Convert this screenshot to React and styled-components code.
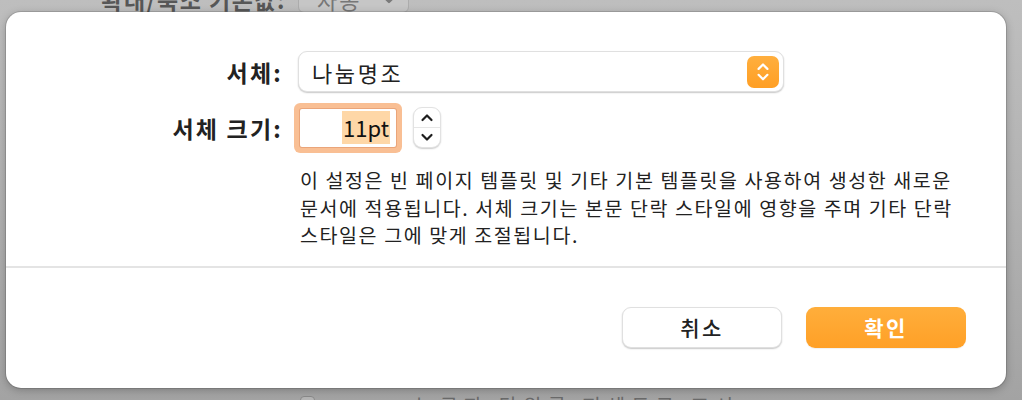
import React from 'react'
import styled, { createGlobalStyle } from 'styled-components'

const GlobalStyle = createGlobalStyle`
  html, body {
    margin: 0;
    padding: 0;
  }
  body {
    font-family: "Noto Sans CJK KR", "Noto Sans", sans-serif;
    color: #222;
  }
`

const font = `"Noto Sans CJK KR", "Noto Sans", sans-serif`

const Page = styled.div`
  position: relative;
  width: 1022px;
  height: 400px;
  overflow: hidden;
  display: flex;
  flex-direction: column;
  justify-content: space-between;
  background: linear-gradient(180deg, #bebebe 0%, #b2b2b2 50%, #a3a3a3 100%);
`

const BgTopRow = styled.div`
  display: flex;
  align-items: flex-end;
  height: 28px;
  margin-top: -15px;
  padding-left: 90px;
  gap: 12px;
`

const BgLabel = styled.div`
  width: 196px;
  text-align: right;
  font-family: ${font};
  font-size: 23px;
  font-weight: 700;
  letter-spacing: 1.5px;
  color: #575757;
  line-height: 28px;
`

const BgPopup = styled.div`
  width: 111px;
  height: 28px;
  box-sizing: border-box;
  display: flex;
  align-items: center;
  justify-content: space-between;
  padding: 0 12px 0 18px;
  border: 1px solid #acacac;
  border-radius: 6px;
  background: #c6c6c6;
  font-family: ${font};
  font-size: 22px;
  letter-spacing: 2px;
  color: #777;
`

const BgBottomRow = styled.div`
  display: flex;
  align-items: flex-start;
  height: 20px;
  margin-bottom: -16px;
  padding-left: 300px;
  gap: 100px;
`

const BgCheck = styled.div`
  width: 13px;
  height: 13px;
  border: 1px solid #8a8a8a;
  border-radius: 4px;
  background: #b4b4b4;
`

const BgText = styled.div`
  font-family: ${font};
  font-size: 20px;
  color: #6a6a6a;
  letter-spacing: 6px;
  line-height: 20px;
`

const Dialog = styled.div`
  position: absolute;
  left: 6px;
  top: 12px;
  width: 1000px;
  height: 376px;
  box-sizing: border-box;
  background: #fff;
  border-radius: 15px;
  box-shadow: 0 0 0 1px rgba(0, 0, 0, 0.12), 0 2px 8px rgba(0, 0, 0, 0.25);
  display: flex;
  flex-direction: column;
`

const Form = styled.div`
  display: grid;
  grid-template-columns: 275px 1fr;
  column-gap: 17px;
  row-gap: 15px;
  padding-top: 39px;
  align-items: center;
`

const Label = styled.div`
  text-align: right;
  font-family: ${font};
  font-size: 23px;
  font-weight: 700;
  letter-spacing: 2.2px;
  margin-right: -2px;
  color: #222;
  white-space: nowrap;
`

const Select = styled.div`
  width: 486px;
  height: 41px;
  box-sizing: border-box;
  display: flex;
  align-items: center;
  justify-content: space-between;
  padding: 0 4px 0 13px;
  border: 1px solid #e0e0e0;
  border-radius: 9px;
  background: #fff;
  box-shadow: 0 1px 1.5px rgba(0, 0, 0, 0.22);
  font-family: ${font};
  font-size: 22px;
  letter-spacing: 2.6px;
  color: #222;
`

const OrangeStepper = styled.div`
  width: 32px;
  height: 32px;
  border-radius: 7px;
  background: linear-gradient(180deg, #ffaf3e 0%, #ff9f24 100%);
  display: flex;
  align-items: center;
  justify-content: center;
`

const SizeRow = styled.div`
  display: flex;
  align-items: center;
  gap: 17px;
  height: 41px;
`

const Field = styled.div`
  width: 96px;
  height: 38px;
  margin-left: 2px;
  box-sizing: border-box;
  display: flex;
  align-items: center;
  justify-content: flex-end;
  padding-right: 6px;
  background: #fff;
  border-radius: 2px;
  box-shadow: 0 0 0 1px #eaa57a, 0 0 0 6px #f9bf94;
`

const Selected = styled.span`
  display: inline-block;
  height: 33px;
  line-height: 33px;
  padding: 0 1px;
  background: #fed7a7;
  font-family: ${font};
  font-size: 22px;
  color: #111;
`

const Stepper = styled.div`
  width: 28px;
  height: 41px;
  box-sizing: border-box;
  border: 1px solid #e2e2e2;
  border-radius: 9px;
  background: #fff;
  box-shadow: 0 1px 1.5px rgba(0, 0, 0, 0.2);
  display: flex;
  flex-direction: column;
`

const StepHalf = styled.div`
  flex: 1;
  display: flex;
  align-items: center;
  justify-content: center;
  border-top: ${(props) => (props.bottom ? '1px solid #e6e6e6' : 'none')};
`

const Description = styled.p`
  grid-column: 2;
  margin: 3px 0 0 2px;
  font-family: ${font};
  font-size: 19.5px;
  letter-spacing: 1.6px;
  line-height: 27.5px;
  color: #222;
  white-space: nowrap;
`

const Separator = styled.div`
  height: 2px;
  margin-top: 17px;
  background: #e4e4e4;
`

const Buttons = styled.div`
  display: flex;
  justify-content: flex-end;
  gap: 24px;
  padding: 39px 40px 0 0;
`

const Button = styled.div`
  width: 160px;
  height: 41px;
  box-sizing: border-box;
  display: flex;
  align-items: center;
  justify-content: center;
  border-radius: 9px;
  font-family: ${font};
  font-size: 21px;
  letter-spacing: 2.5px;
  font-weight: ${(props) => (props.primary ? 700 : 500)};
  color: ${(props) => (props.primary ? '#fff' : '#222')};
  background: ${(props) =>
    props.primary ? 'linear-gradient(180deg, #ffae3b 0%, #ffa027 100%)' : '#fff'};
  border: ${(props) => (props.primary ? 'none' : '1px solid #e0e0e0')};
  box-shadow: ${(props) =>
    props.primary ? '0 1px 1px rgba(0, 0, 0, 0.06)' : '0 1px 1.5px rgba(0, 0, 0, 0.22)'};
`

const Chevrons = ({ color = '#fff', size = 14 }) => (
  <svg width={size} height={size * 1.55} viewBox="0 0 14 22" fill="none">
    <path d="M2.5 8 L7 3.5 L11.5 8" stroke={color} strokeWidth="2.2" strokeLinecap="round" strokeLinejoin="round" />
    <path d="M2.5 14 L7 18.5 L11.5 14" stroke={color} strokeWidth="2.2" strokeLinecap="round" strokeLinejoin="round" />
  </svg>
)

const Chevron = ({ up }) => (
  <svg width="14" height="9" viewBox="0 0 14 9" fill="none">
    <path
      d={up ? 'M2.5 7 L7 2.5 L11.5 7' : 'M2.5 2 L7 6.5 L11.5 2'}
      stroke="#1e1e1e"
      strokeWidth="2.2"
      strokeLinecap="round"
      strokeLinejoin="round"
    />
  </svg>
)

const SmallChevronDown = () => (
  <svg width="14" height="9" viewBox="0 0 14 9" fill="none">
    <path d="M2 2 L7 7 L12 2" stroke="#7a7a7a" strokeWidth="2.4" strokeLinecap="round" strokeLinejoin="round" />
  </svg>
)

const App = () => {
  return (
    <>
      <GlobalStyle />
      <Page>
        <BgTopRow>
          <BgLabel>확대/축소 기본값:</BgLabel>
          <BgPopup>
            자동
            <SmallChevronDown />
          </BgPopup>
        </BgTopRow>
        <BgBottomRow>
          <BgCheck />
          <BgText>눈금자 단위를 퍼센트로 표시</BgText>
        </BgBottomRow>

        <Dialog>
          <Form>
            <Label>서체:</Label>
            <Select>
              나눔명조
              <OrangeStepper>
                <Chevrons />
              </OrangeStepper>
            </Select>

            <Label>서체 크기:</Label>
            <SizeRow>
              <Field>
                <Selected>11pt</Selected>
              </Field>
              <Stepper>
                <StepHalf>
                  <Chevron up />
                </StepHalf>
                <StepHalf bottom>
                  <Chevron />
                </StepHalf>
              </Stepper>
            </SizeRow>

            <Description>
              이 설정은 빈 페이지 템플릿 및 기타 기본 템플릿을 사용하여 생성한 새로운
              <br />
              문서에 적용됩니다. 서체 크기는 본문 단락 스타일에 영향을 주며 기타 단락
              <br />
              스타일은 그에 맞게 조절됩니다.
            </Description>
          </Form>
          <Separator />
          <Buttons>
            <Button>취소</Button>
            <Button primary>확인</Button>
          </Buttons>
        </Dialog>
      </Page>
    </>
  )
}

export default App
